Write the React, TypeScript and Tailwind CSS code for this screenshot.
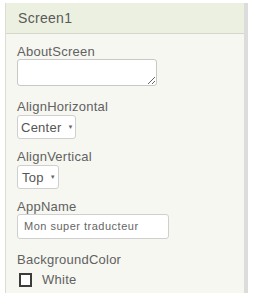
export default function App() {
  return (
    <div className="h-[300px] w-[255px] bg-white pl-[5px] pt-[3px] font-['Liberation_Sans',Arial,sans-serif] text-[#616161]">
      <div className="flex h-[290px] w-[243px] flex-col border-l border-r-4 border-l-[#dcdcd6] border-r-[#dcdcdc] bg-[#f6f7f1]">
        <div className="flex h-[31px] items-center border-b border-[#d4d8c8] bg-[#ecf0e0] pl-[12px] text-[14px] tracking-[0.3px] text-[#595959]">
          Screen1
        </div>
        <div className="flex flex-col items-start pl-[11px] pt-[10px] text-[13px] leading-[15px] tracking-[0.25px]">
          <span>AboutScreen</span>
          <textarea className="h-[27px] w-[140px] resize rounded-[3px] border border-[#c8c8c8] bg-white" />

          <span className="mt-[13px]">AlignHorizontal</span>
          <div className="mt-[1px] flex h-[24px] w-[59px] items-center rounded-[3px] border border-[#cfcfcf] bg-white pl-[3px] text-[#555]">
            Center
            <span className="ml-[6px] mt-[1px] text-[6px] text-[#666]">▼</span>
          </div>

          <span className="mt-[10px]">AlignVertical</span>
          <div className="mt-[1px] flex h-[24px] w-[42px] items-center rounded-[3px] border border-[#cfcfcf] bg-white pl-[4px] text-[#555]">
            Top
            <span className="ml-[6px] mt-[1px] text-[6px] text-[#666]">▼</span>
          </div>

          <span className="mt-[10px]">AppName</span>
          <div className="flex h-[25px] w-[152px] items-center rounded-[3px] border border-[#cfcfcf] bg-white pl-[6px] text-[11px] tracking-[0.5px] text-[#666]">
            Mon super traducteur
          </div>

          <span className="mt-[13px]">BackgroundColor</span>
          <div className="mt-[5px] flex items-center">
            <div className="ml-[2px] h-[14px] w-[13px] border-2 border-[#3c3c3c] bg-white" />
            <span className="ml-[10px]">White</span>
          </div>
        </div>
      </div>
    </div>
  );
}
